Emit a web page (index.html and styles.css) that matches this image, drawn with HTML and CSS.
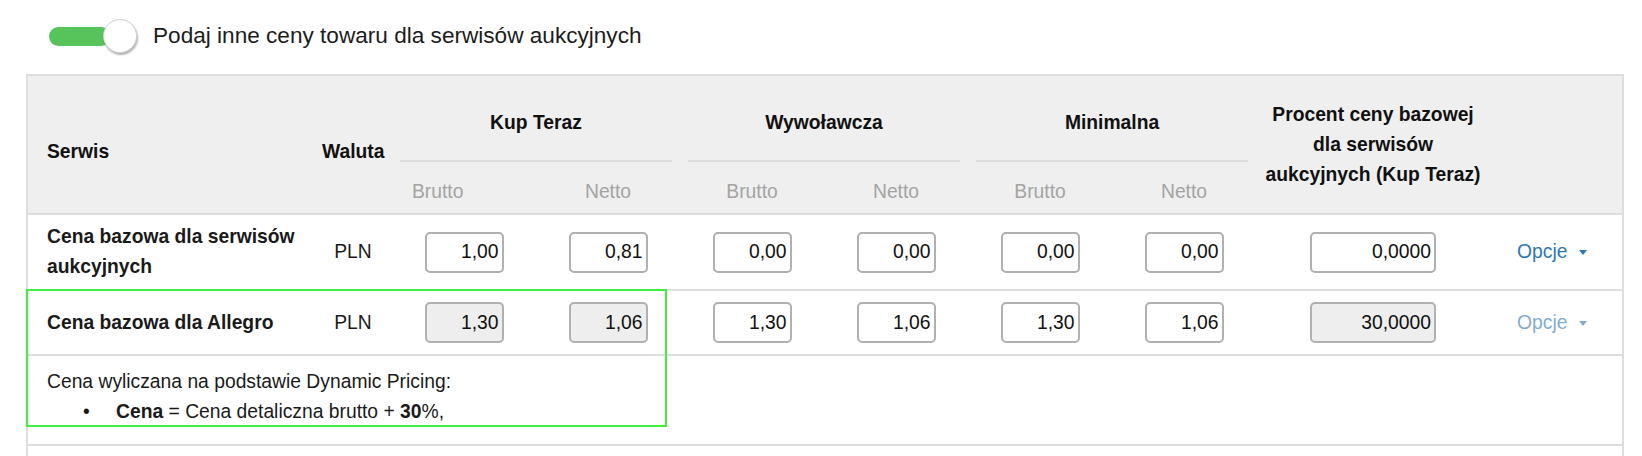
FILE: index.html
```html
<!DOCTYPE html>
<html lang="pl">
<head>
    <meta charset="UTF-8">
    <meta name="viewport" content="width=device-width, initial-scale=1.0">
    <title>Ceny dla serwisów aukcyjnych</title>
    <link rel="stylesheet" href="styles.css">
</head>
<body>

    <div class="page">
        <div class="toggle-row">
            <span class="switch"><span class="track"></span><span class="knob"></span></span>
            <span class="toggle-label">Podaj inne ceny towaru dla serwisów aukcyjnych</span>
        </div>

        <div class="table-wrap">
            <table class="price-table">
                <colgroup>
                    <col class="col-name">
                    <col class="col-cur">
                    <col class="col-price"><col class="col-price">
                    <col class="col-price"><col class="col-price">
                    <col class="col-price"><col class="col-price">
                    <col class="col-pct">
                    <col class="col-opt">
                </colgroup>
                <thead>
                    <tr>
                        <th rowspan="2" class="side name">Serwis</th>
                        <th rowspan="2" class="side cur">Waluta</th>
                        <th colspan="2" class="group"><div class="group-title">Kup Teraz</div></th>
                        <th colspan="2" class="group"><div class="group-title">Wywoławcza</div></th>
                        <th colspan="2" class="group"><div class="group-title">Minimalna</div></th>
                        <th rowspan="2" class="pct">Procent ceny bazowej<br>dla serwisów<br>aukcyjnych (Kup Teraz)</th>
                        <th rowspan="2"></th>
                    </tr>
                    <tr>
                        <th class="sub first">Brutto</th>
                        <th class="sub">Netto</th>
                        <th class="sub">Brutto</th>
                        <th class="sub">Netto</th>
                        <th class="sub">Brutto</th>
                        <th class="sub">Netto</th>
                    </tr>
                </thead>
                <tbody>
                    <tr class="row-base">
                        <td class="name"><strong>Cena bazowa dla serwisów aukcyjnych</strong></td>
                        <td class="cur">PLN</td>
                        <td><input class="price-input" value="1,00"></td>
                        <td><input class="price-input" value="0,81"></td>
                        <td><input class="price-input" value="0,00"></td>
                        <td><input class="price-input" value="0,00"></td>
                        <td><input class="price-input" value="0,00"></td>
                        <td><input class="price-input" value="0,00"></td>
                        <td><input class="price-input wide" value="0,0000"></td>
                        <td class="opt"><a class="options">Opcje<span class="caret"></span></a></td>
                    </tr>
                    <tr class="row-service">
                        <td class="name"><strong>Cena bazowa dla Allegro</strong></td>
                        <td class="cur">PLN</td>
                        <td><input class="price-input locked" value="1,30" readonly></td>
                        <td><input class="price-input locked" value="1,06" readonly></td>
                        <td><input class="price-input" value="1,30"></td>
                        <td><input class="price-input" value="1,06"></td>
                        <td><input class="price-input" value="1,30"></td>
                        <td><input class="price-input" value="1,06"></td>
                        <td><input class="price-input wide locked" value="30,0000" readonly></td>
                        <td class="opt"><a class="options disabled">Opcje<span class="caret"></span></a></td>
                    </tr>
                    <tr class="row-info">
                        <td colspan="10" class="info">
                            Cena wyliczana na podstawie Dynamic Pricing:
                            <ul class="rule-list">
                                <li><strong>Cena</strong> = Cena detaliczna brutto + <strong>30</strong>%,</li>
                            </ul>
                        </td>
                    </tr>
                    <tr class="row-empty">
                        <td colspan="10"></td>
                    </tr>
                </tbody>
            </table>
            <div class="highlight"></div>
        </div>
    </div>

</body>
</html>
```

FILE: styles.css
```css
body {
    font-family: "Liberation Sans", Arial, sans-serif;
    font-size: 19.3px;
    color: #1a1a1a;
    background-color: #fff;
    margin: 0;
    padding: 0;
}

.page {
    padding: 19px 18px 0 26px;
}

/* toggle */
.toggle-row {
    display: flex;
    align-items: center;
    height: 34px;
    margin-bottom: 21px;
}

.switch {
    display: flex;
    align-items: center;
    margin-left: 23px;
}

.switch .track {
    width: 62px;
    height: 19px;
    border-radius: 10px;
    background-color: #56c35b;
}

.switch .knob {
    width: 34px;
    height: 34px;
    box-sizing: border-box;
    margin-left: -8px;
    border-radius: 50%;
    background-color: #fff;
    border: 1px solid #d2d2d2;
    box-shadow: 1px 2px 2px rgba(0, 0, 0, 0.3);
}

.toggle-label {
    margin-left: 16px;
    font-size: 22.6px;
    color: #1c1c1c;
}

/* table */
.table-wrap {
    position: relative;
}

.price-table {
    width: 1598px;
    table-layout: fixed;
    border-collapse: separate;
    border-spacing: 0;
    border: 2px solid #dedede;
    border-bottom: none;
}

.col-name { width: 286px; }
.col-cur { width: 78px; }
.col-price { width: 144px; }
.col-pct { width: 234px; }
.col-opt { width: 132px; }

.price-table th {
    background-color: #efefef;
    font-weight: bold;
    color: #111;
    line-height: 30px;
    padding: 0 8px;
    text-align: center;
    vertical-align: middle;
}

.price-table th.side {
    padding-top: 15px;
    white-space: nowrap;
}

.price-table th.name {
    text-align: left;
    padding-left: 19px;
}

.price-table th.group {
    padding-top: 32px;
    vertical-align: top;
}

.group-title {
    padding-bottom: 22px;
    border-bottom: 2px solid #dcdcdc;
}

.price-table th.sub {
    font-weight: normal;
    color: #a3a3a3;
    padding-top: 15px;
    padding-bottom: 6px;
}

.price-table th.sub.first {
    text-align: left;
    padding-left: 20px;
}

.price-table th.pct {
    white-space: nowrap;
}

.price-table td {
    border-top: 2px solid #dedede;
    padding: 0 8px;
    text-align: center;
    vertical-align: middle;
}

.price-table td.name {
    text-align: left;
    padding-left: 19px;
    line-height: 30px;
}

.row-base td {
    padding-top: 7px;
    padding-bottom: 7px;
}

.row-service td {
    padding-top: 11px;
    padding-bottom: 11px;
}

.price-input {
    width: 79px;
    height: 41px;
    box-sizing: border-box;
    border: 2px solid #b0b0b0;
    border-radius: 5px;
    padding: 0 3px;
    font-family: inherit;
    font-size: 19.3px;
    color: #111;
    text-align: right;
    background-color: #fff;
    vertical-align: middle;
}

.price-input.wide {
    width: 126px;
}

.price-input.locked {
    background-color: #eeeeee;
}

.price-table td.opt {
    text-align: left;
    padding-left: 27px;
}

.options {
    color: #2b78b8;
    cursor: pointer;
    white-space: nowrap;
}

.options.disabled {
    opacity: 0.6;
    cursor: default;
}

.caret {
    display: inline-block;
    margin-left: 12px;
    vertical-align: middle;
    border-top: 5px solid;
    border-left: 4px solid transparent;
    border-right: 4px solid transparent;
}

.price-table td.info {
    text-align: left;
    vertical-align: top;
    padding: 11px 8px 17px 19px;
    line-height: 30px;
}

.rule-list {
    list-style: none;
    margin: 0;
    padding: 0 0 0 36px;
}

.rule-list li::before {
    content: "\2022";
    display: inline-block;
    width: 33px;
}

.row-empty td {
    height: 40px;
    padding: 0;
}

/* annotation frame over the Allegro row */
.highlight {
    position: absolute;
    left: 0;
    top: 215px;
    width: 641px;
    height: 138px;
    box-sizing: border-box;
    border: 2px solid #3eef3e;
    pointer-events: none;
}
```
